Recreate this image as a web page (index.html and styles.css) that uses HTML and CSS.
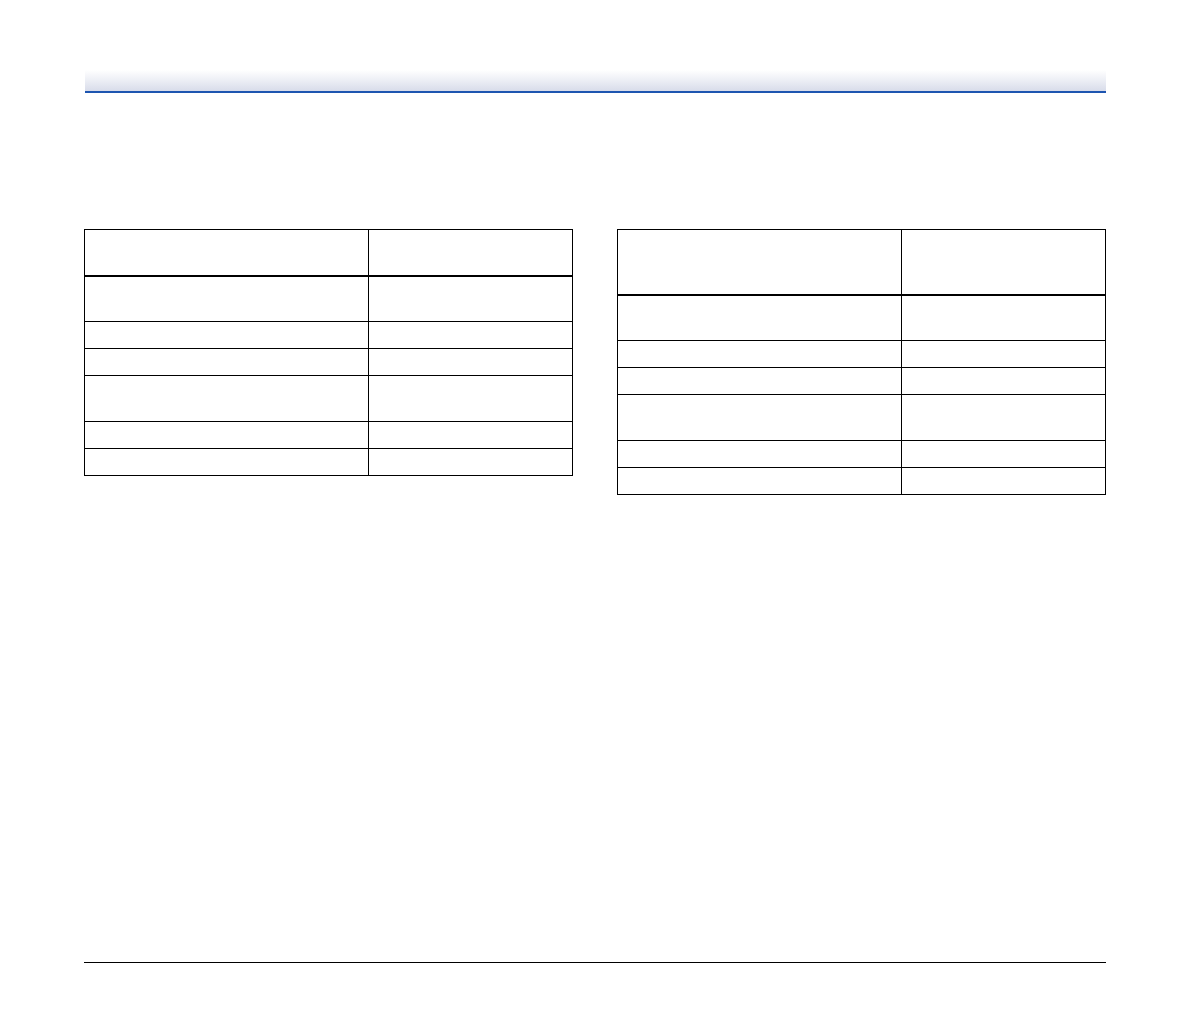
FILE: index.html
```html
<!DOCTYPE html>
<html>
<head>
<meta charset="utf-8">
<link rel="stylesheet" href="styles.css">
</head>
<body>
<div class="page">
  <div class="banner"></div>
  <div class="tables">
    <table class="grid">
      <tr class="head"><td class="c1"></td><td class="c2"></td></tr>
      <tr class="tall first"><td></td><td></td></tr>
      <tr class="short"><td></td><td></td></tr>
      <tr class="short"><td></td><td></td></tr>
      <tr class="tall"><td></td><td></td></tr>
      <tr class="short"><td></td><td></td></tr>
      <tr class="short"><td></td><td></td></tr>
    </table>
    <table class="grid">
      <tr class="head head-big"><td class="c1"></td><td class="c2"></td></tr>
      <tr class="tall first"><td></td><td></td></tr>
      <tr class="short"><td></td><td></td></tr>
      <tr class="short"><td></td><td></td></tr>
      <tr class="tall"><td></td><td></td></tr>
      <tr class="short"><td></td><td></td></tr>
      <tr class="short"><td></td><td></td></tr>
    </table>
  </div>
  <div class="footer-rule"></div>
</div>
</body>
</html>
```
FILE: styles.css
```css
html, body {
  margin: 0;
  padding: 0;
  background: #ffffff;
  font-family: "Liberation Sans", Arial, sans-serif;
}

.page {
  padding: 70px 0 0 84px;
  width: 1022px;
}

.banner {
  margin-left: 1px;
  width: 1021px;
  height: 21px;
  background: linear-gradient(to bottom, #ffffff 0%, #eef0f6 45%, #d8dcea 100%);
  border-bottom: 2px solid #1d55b0;
}

.tables {
  display: flex;
  align-items: flex-start;
  gap: 44px;
  margin-top: 136px;
}

.grid {
  border-collapse: collapse;
  width: 489px;
  table-layout: fixed;
}

.grid td {
  border: 1px solid #000;
  padding: 0;
}

.grid .c1 {
  width: 283px;
}

.grid .head td {
  border-bottom: 2px solid #000;
  height: 45px;
}

.grid .head-big td {
  height: 64px;
}

.grid .tall td {
  height: 45px;
}

.grid .tall.first td {
  height: 44px;
}

.grid .short td {
  height: 26px;
}

.footer-rule {
  margin-top: 467px;
  width: 1022px;
  height: 1px;
  background: #000;
}
```
